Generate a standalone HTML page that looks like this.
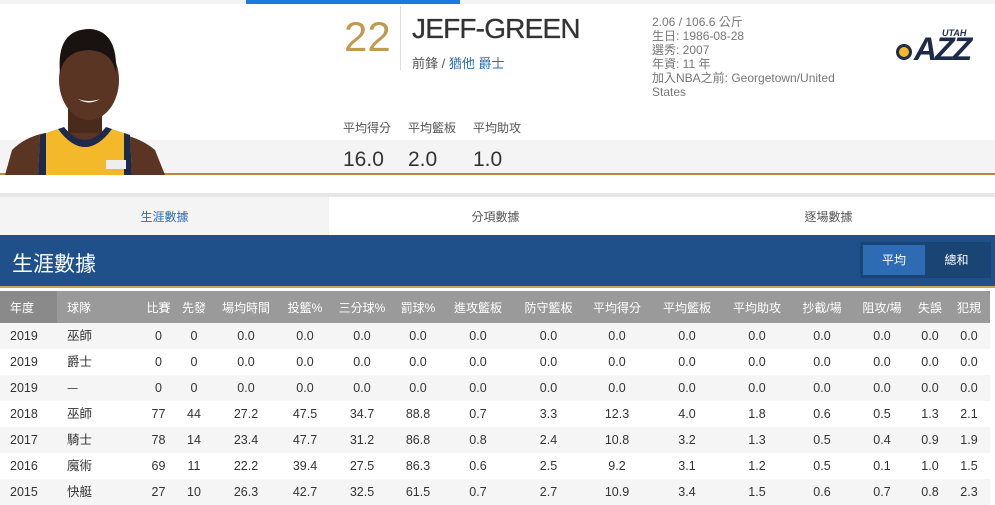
<!DOCTYPE html>
<html><head><meta charset="utf-8"><style>
*{margin:0;padding:0;box-sizing:border-box}
body{width:995px;height:501px;overflow:hidden;background:#fff;font-family:"Liberation Sans","Noto Sans CJK TC",sans-serif;position:relative;color:#333}
.abs{position:absolute}
table{position:absolute;left:0;top:291px;border-collapse:collapse;table-layout:fixed;width:990px;font-size:12.5px}
th{background:#9a9a9a;color:#fff;font-weight:normal;height:32px;text-align:center;white-space:nowrap;font-size:12px}
th:first-child{background:#8a8a8a;text-align:left;padding-left:10px}
th:nth-child(2),td:nth-child(2){text-align:left;padding-left:10px}
td{height:26px;line-height:14px;text-align:center;white-space:nowrap;color:#333;vertical-align:middle}
td:nth-child(2){font-family:"Noto Sans CJK TC",sans-serif;font-size:12.5px;line-height:12px;padding-bottom:3px}
td:first-child{text-align:left;padding-left:10px}
tr.g td{background:#f5f5f5}
</style></head><body>
<div class="abs" style="left:0;top:0;width:995px;height:4px;background:#f2f2f2"></div>
<div class="abs" style="left:246px;top:0;width:214px;height:4px;background:#1a7ae0"></div>
<div class="abs" style="left:0;top:140px;width:995px;height:34px;background:#f4f4f4"></div>
<div class="abs" style="left:0;top:173px;width:995px;height:2px;background:#b98a3c"></div>
<svg class="abs" style="left:0;top:25px" width="170" height="150" viewBox="0 0 170 150">
<path d="M5 150 L12 125 Q25 112 45 108 L115 108 Q140 112 155 125 L165 150Z" fill="#5a3524"/>
<path d="M38 150 L40 110 L58 104 Q85 140 112 104 L130 110 L132 150Z" fill="#f4b82b"/>
<path d="M38 150 L40 110 L46 108 L46 150Z M124 108 L130 110 L132 150 L124 150Z" fill="#1d2a4a"/>
<path d="M58 104 Q85 140 112 104 L106 102 Q85 128 64 102Z" fill="#1d2a4a"/>
<rect x="68" y="80" width="34" height="28" fill="#4a2a1a"/>
<ellipse cx="89" cy="55" rx="30" ry="40" fill="#5a3524"/>
<path d="M60 48 Q56 4 90 4 Q118 6 116 48 Q112 26 89 25 Q64 26 60 48Z" fill="#1a1210"/>
<path d="M78 74 Q89 81 100 74 Q89 78 78 74Z" fill="#fff"/>
<rect x="106" y="135" width="20" height="9" fill="#eee"/>
</svg>
<div class="abs" style="left:344px;top:13px;font-size:42px;color:#c19a52">22</div>
<div class="abs" style="left:400px;top:6px;width:1px;height:64px;background:#ddd"></div>
<div class="abs" style="left:412px;top:13px;font-size:28px;color:#333;letter-spacing:-0.8px;-webkit-text-stroke:0.3px #333">JEFF-GREEN</div>
<div class="abs" style="left:412px;top:53px;font-size:13px;color:#555">前鋒 / <span style="color:#2b6cb0">猶他 爵士</span></div>
<div class="abs" style="left:652px;top:15px;font-size:12px;line-height:14px;color:#777;width:200px">2.06 / 106.6 公斤<br>生日: 1986-08-28<br>選秀: 2007<br>年資: 11 年<br>加入NBA之前: Georgetown/United States</div>
<div class="abs" style="left:896px;top:30px;width:80px;height:38px">
<div class="abs" style="left:0;top:14px;width:16px;height:16px;border-radius:50%;background:#f4b82b;border:3px solid #1d2a4a"></div>
<div class="abs" style="left:18px;top:0;font:italic bold 32px 'Liberation Sans';color:#1d2a4a;letter-spacing:-2px;line-height:38px">AZZ</div>
<div class="abs" style="left:46px;top:-2px;font:italic bold 9px 'Liberation Sans';color:#1d2a4a">UTAH</div>
</div>
<div class="abs" style="left:343px;top:119px;font-size:12px;color:#555">平均得分</div>
<div class="abs" style="left:408px;top:119px;font-size:12px;color:#555">平均籃板</div>
<div class="abs" style="left:473px;top:119px;font-size:12px;color:#555">平均助攻</div>
<div class="abs" style="left:343px;top:148px;font-size:21px;color:#333">16.0</div>
<div class="abs" style="left:408px;top:148px;font-size:21px;color:#333">2.0</div>
<div class="abs" style="left:473px;top:148px;font-size:21px;color:#333">1.0</div>
<div class="abs" style="left:0;top:193px;width:995px;height:4px;background:#e6e6e6"></div>
<div class="abs" style="left:0;top:197px;width:329px;height:38px;background:#f4f4f4"></div>
<div class="abs" style="left:0;top:208px;width:329px;text-align:center;font-size:12px;color:#2b6cb0">生涯數據</div>
<div class="abs" style="left:329px;top:208px;width:333px;text-align:center;font-size:12px;color:#555">分項數據</div>
<div class="abs" style="left:662px;top:208px;width:333px;text-align:center;font-size:12px;color:#555">逐場數據</div>
<div class="abs" style="left:0;top:235px;width:995px;height:52px;background:#1f508a"></div>
<div class="abs" style="left:0;top:286px;width:995px;height:2px;background:#c9a55a"></div>
<div class="abs" style="left:12px;top:248px;font-size:21px;color:#fff">生涯數據</div>
<div class="abs" style="left:860px;top:242px;width:131px;height:36px;background:#1a4473"></div>
<div class="abs" style="left:863px;top:245px;width:62px;height:30px;background:#2d6cb5;color:#fff;font-size:12px;text-align:center;line-height:30px">平均</div>
<div class="abs" style="left:925px;top:245px;width:63px;height:30px;color:#fff;font-size:12px;text-align:center;line-height:30px">總和</div>
<table>
<colgroup><col style="width:57px"><col style="width:83px"><col style="width:37px"><col style="width:34px"><col style="width:70px"><col style="width:48px"><col style="width:66px"><col style="width:46px"><col style="width:74px"><col style="width:67px"><col style="width:70px"><col style="width:70px"><col style="width:70px"><col style="width:60px"><col style="width:60px"><col style="width:36px"><col style="width:42px"></colgroup>
<tr><th>年度</th><th>球隊</th><th>比賽</th><th>先發</th><th>場均時間</th><th>投籃%</th><th>三分球%</th><th>罰球%</th><th>進攻籃板</th><th>防守籃板</th><th>平均得分</th><th>平均籃板</th><th>平均助攻</th><th>抄截/場</th><th>阻攻/場</th><th>失誤</th><th>犯規</th></tr>
<tr class="g"><td>2019</td><td>巫師</td><td>0</td><td>0</td><td>0.0</td><td>0.0</td><td>0.0</td><td>0.0</td><td>0.0</td><td>0.0</td><td>0.0</td><td>0.0</td><td>0.0</td><td>0.0</td><td>0.0</td><td>0.0</td><td>0.0</td></tr>
<tr><td>2019</td><td>爵士</td><td>0</td><td>0</td><td>0.0</td><td>0.0</td><td>0.0</td><td>0.0</td><td>0.0</td><td>0.0</td><td>0.0</td><td>0.0</td><td>0.0</td><td>0.0</td><td>0.0</td><td>0.0</td><td>0.0</td></tr>
<tr class="g"><td>2019</td><td>—</td><td>0</td><td>0</td><td>0.0</td><td>0.0</td><td>0.0</td><td>0.0</td><td>0.0</td><td>0.0</td><td>0.0</td><td>0.0</td><td>0.0</td><td>0.0</td><td>0.0</td><td>0.0</td><td>0.0</td></tr>
<tr><td>2018</td><td>巫師</td><td>77</td><td>44</td><td>27.2</td><td>47.5</td><td>34.7</td><td>88.8</td><td>0.7</td><td>3.3</td><td>12.3</td><td>4.0</td><td>1.8</td><td>0.6</td><td>0.5</td><td>1.3</td><td>2.1</td></tr>
<tr class="g"><td>2017</td><td>騎士</td><td>78</td><td>14</td><td>23.4</td><td>47.7</td><td>31.2</td><td>86.8</td><td>0.8</td><td>2.4</td><td>10.8</td><td>3.2</td><td>1.3</td><td>0.5</td><td>0.4</td><td>0.9</td><td>1.9</td></tr>
<tr><td>2016</td><td>魔術</td><td>69</td><td>11</td><td>22.2</td><td>39.4</td><td>27.5</td><td>86.3</td><td>0.6</td><td>2.5</td><td>9.2</td><td>3.1</td><td>1.2</td><td>0.5</td><td>0.1</td><td>1.0</td><td>1.5</td></tr>
<tr class="g"><td>2015</td><td>快艇</td><td>27</td><td>10</td><td>26.3</td><td>42.7</td><td>32.5</td><td>61.5</td><td>0.7</td><td>2.7</td><td>10.9</td><td>3.4</td><td>1.5</td><td>0.6</td><td>0.7</td><td>0.8</td><td>2.3</td></tr>
</table>
</body></html>
